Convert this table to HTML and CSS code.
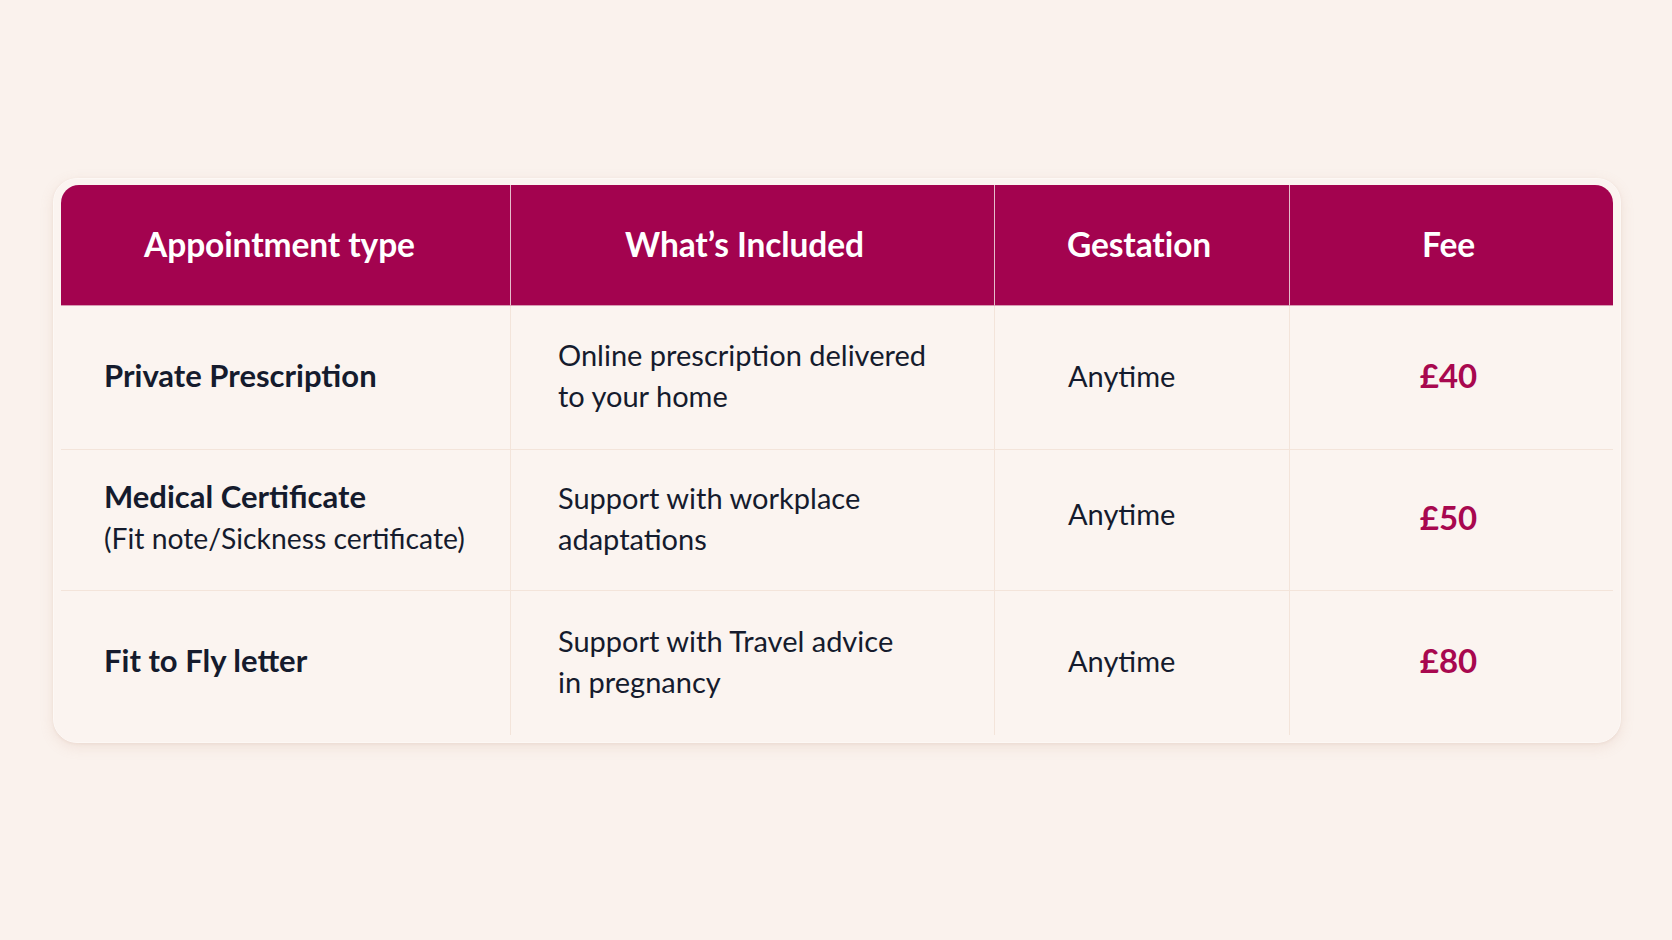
FILE: index.html
```html
<!DOCTYPE html>
<html lang="en">
<head>
<meta charset="utf-8">
<title>Appointment fees</title>
<link rel="stylesheet" href="styles.css">
</head>
<body>
<main class="page">
  <section class="card">
    <div class="table">
      <div class="th th-c1">Appointment type</div>
      <div class="th th-c2">What’s Included</div>
      <div class="th th-c3">Gestation</div>
      <div class="th th-c4">Fee</div>

      <div class="td td-type"><div><strong>Private Prescription</strong></div></div>
      <div class="td td-inc"><div>Online prescription delivered<br>to your home</div></div>
      <div class="td td-ges">Anytime</div>
      <div class="td td-fee">£40</div>

      <div class="td td-type"><div><strong>Medical Certificate</strong><br><span class="sub">(Fit note/Sickness certificate)</span></div></div>
      <div class="td td-inc"><div>Support with workplace<br>adaptations</div></div>
      <div class="td td-ges raise">Anytime</div>
      <div class="td td-fee">£50</div>

      <div class="td td-type last"><div><strong>Fit to Fly letter</strong></div></div>
      <div class="td td-inc last"><div>Support with Travel advice<br>in pregnancy</div></div>
      <div class="td td-ges last">Anytime</div>
      <div class="td td-fee last">£80</div>
    </div>
  </section>
</main>
</body>
</html>
```

FILE: styles.css
```css
html, body {
  margin: 0;
  padding: 0;
}
body {
  background: #faf2ed;
  font-family: Lato, "Open Sans", "Liberation Sans", sans-serif;
  color: #151b2d;
  width: 1672px;
  height: 940px;
  overflow: hidden;
}
.page {
  padding: 178px 0 0 53px;
}
.card {
  width: 1552px;
  padding: 6px 7px 7px 7px;
  background: #fbf4f0;
  border: 1px solid #fdf8f5;
  border-radius: 24px;
  box-shadow: 0 4px 14px rgba(190, 140, 120, 0.16), 0 1px 3px rgba(190, 140, 120, 0.12);
}
.table {
  display: grid;
  grid-template-columns: 450px 484px 295px 1fr;
  grid-template-rows: 121px 144px 141px 144px;
  border-radius: 18px;
  overflow: hidden;
}
.th {
  background: #a3034f;
  color: #ffffff;
  font-weight: 700;
  font-size: 33.5px;
  display: flex;
  align-items: center;
  justify-content: center;
  border-right: 1px solid #e6bccb;
  border-bottom: 1px solid #d79ab2;
  padding-bottom: 2px;
  letter-spacing: -0.1px;
}
.th-c1 {
  padding-right: 12px;
}
.th-c2 {
  padding-right: 16px;
}
.th-c3 {
  padding-right: 6px;
}
.th-c4 {
  padding-right: 6px;
  border-right: none;
}
.td {
  display: flex;
  align-items: center;
  font-size: 29px;
  line-height: 41px;
  padding-bottom: 5px;
  border-right: 1px solid #f3e4da;
  border-bottom: 1px solid #f3e4da;
  background: #fbf4f0;
}
.td.last {
  border-bottom: none;
}
.td-type {
  padding-left: 43px;
}
.td-type strong {
  font-weight: 700;
  font-size: 31px;
}
.td-type .sub {
  font-size: 28.3px;
}
.td-inc {
  padding-left: 47px;
}
.td-ges {
  padding-left: 73px;
}
.td-ges.raise {
  padding-bottom: 14px;
}
.td-fee {
  justify-content: center;
  padding-right: 6px;
  border-right: none;
  font-weight: 700;
  font-size: 33px;
  color: #a8084f;
}
```
